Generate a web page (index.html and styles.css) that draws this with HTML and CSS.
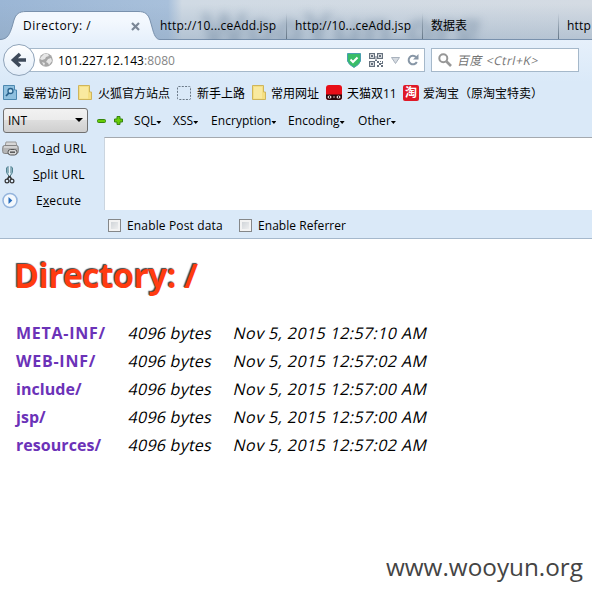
FILE: index.html
```html
<!DOCTYPE html>
<html lang="zh-CN">
<head>
<meta charset="utf-8">
<title>Directory: /</title>
<link rel="stylesheet" href="styles.css">
</head>
<body>
<header class="chrome">
  <div class="tabs">
    <div class="tab active">
      <svg class="tab-shape" width="160" height="41" viewBox="0 0 160 41">
        <defs><linearGradient id="tabfill" x1="0" y1="0" x2="0" y2="1"><stop offset="0.3" stop-color="#f3f8fe"/><stop offset="1" stop-color="#e6f0fb"/></linearGradient></defs>
        <path d="M0 39.5C8 39.500 10 33 12 27L14 20C16 14 19 11.500 26 11.500H138C145 11.500 148 14 150 20L152 27C154 35 156 39.500 160 39.500V41H0Z" fill="url(#tabfill)"/>
        <path d="M0 39.500C8 39.500 10 33 12 27L14 20C16 14 19 11.500 26 11.500H138C145 11.500 148 14 150 20L152 27C154 35 156 39.500 160 39.500" fill="none" stroke="#7991ad"/>
      </svg>
      <span class="label">Directory: /</span>
      <svg class="close" width="9" height="9" viewBox="0 0 9 9"><path d="M1 1L8 8M8 1L1 8" stroke="#7b8796" stroke-width="2.200"/></svg>
    </div>
    <div class="tab">http://10...ceAdd.jsp</div>
    <div class="tab">http://10...ceAdd.jsp</div>
    <div class="tab cjk">数据表</div>
    <div class="tab last">http</div>
  </div>

  <div class="nav">
    <svg class="back" width="34" height="34" viewBox="0 0 34 34">
      <defs><linearGradient id="backfill" x1="0" y1="0" x2="0" y2="1"><stop offset="0" stop-color="#fff"/><stop offset="1" stop-color="#e2edf9"/></linearGradient></defs>
      <circle cx="16" cy="16" r="15.500" fill="url(#backfill)" stroke="#8fa3b9"/>
      <path d="M17 10L10.500 16L17 22M11 16H23" fill="none" stroke="#3e4a5a" stroke-width="3.600"/>
    </svg>
    <div class="urlbar">
      <svg class="globe" width="14" height="14" viewBox="0 0 14 14"><circle cx="7" cy="7" r="6.800" fill="#a6a6a6"/><path d="M2 4L5 1L9 1L10 3L7 4L6 6L3 7L1 6ZM9 6L12 5L13 8L10 12L9 10L7 9ZM3 9L6 10L5 13Z" fill="#e6e6e6"/></svg>
      <span class="url">101.227.12.143<span class="port">:8080</span></span>
      <svg class="shield" width="14" height="15" viewBox="0 0 14 15"><path d="M.5 .5H13.500V8Q12.500 11.500 7 14.500Q1.500 11.500 .5 8Z" fill="#39bd68" stroke="#4a9fb0"/><path d="M3.500 6.500L6 9L10.500 4.500" fill="none" stroke="#fff" stroke-width="2"/></svg>
      <svg class="qr" width="15" height="15" viewBox="0 0 15 15"><g fill="none" stroke="#66717e" stroke-width="1.200"><path d="M.6.6H5.400V5.400H.6ZM8.600.6H13.400V5.400H8.600ZM.6 8.600H5.400V13.400H.6Z"/></g><path d="M2 2H4V4H2ZM10 2H12V4H10ZM2 10H4V12H2ZM8 8H10V10H8ZM11 8H12V9H11ZM13 8H14V11H12V10H13ZM10 10H12V12H10ZM8 12H10V14H8ZM12 12H14V14H12ZM6.500 3H7.500V7H6.500ZM6 7H8V8H6Z" fill="#66717e"/></svg>
      <svg class="drop" width="9" height="7" viewBox="0 0 9 7"><path d="M.5 .5H8.500L4.500 6.500Z" fill="#d5dae0" stroke="#a9b2bd"/></svg>
      <svg class="reload" width="12" height="12" viewBox="0 0 12 12"><path d="M9 3A4.300 4.300 0 1 0 9.800 8" fill="none" stroke="#8796a6" stroke-width="2"/><path d="M11.500 0V5.500H6Z" fill="#8796a6"/></svg>
    </div>
    <div class="search">
      <svg width="14" height="14" viewBox="0 0 14 14"><circle cx="5.300" cy="5.300" r="4" fill="none" stroke="#979797" stroke-width="2"/><path d="M8.500 8.500L13 13" stroke="#979797" stroke-width="2.600"/></svg>
      <span class="hint">百度 &lt;Ctrl+K&gt;</span>
    </div>
  </div>

  <div class="bookmarks">
    <div class="bm w75"><svg width="16" height="16" viewBox="0 0 16 16"><path d="M.5 .5H11.500V5H13.500V14.500H.5Z" fill="#8fc0df" stroke="#4c88b0"/><circle cx="7.500" cy="6" r="2.500" fill="#c9e6f5" stroke="#27608c" stroke-width="1.300"/><path d="M5.800 8L3 11" stroke="#27608c" stroke-width="1.800"/></svg>最常访问</div>
    <div class="bm w99"><svg width="16" height="16" viewBox="0 0 16 16"><path d="M.5 .5H11.500V7H13.500V14.500H.5Z" fill="#f5df82" stroke="#cfb55c"/><path d="M2 13.500V2H10V13.500Z" fill="#f9e99f"/></svg>火狐官方站点</div>
    <div class="bm w74"><svg width="16" height="16" viewBox="0 0 16 16"><rect x=".5" y="1.500" width="13" height="13" rx="1" fill="none" stroke="#697785" stroke-dasharray="2 1.300"/></svg>新手上路</div>
    <div class="bm w75"><svg width="16" height="16" viewBox="0 0 16 16"><path d="M1.500 .5H12.500V7H14.500V14.500H1.500Z" fill="#f5df82" stroke="#cfb55c"/><path d="M3 13.500V2H11V13.500Z" fill="#f9e99f"/></svg>常用网址</div>
    <div class="bm w77"><svg width="16" height="16" viewBox="0 0 16 16"><rect width="16" height="15" rx="3" fill="#e70e17"/><path d="M0 9.500H16V12Q16 15 13 15H3Q0 15 0 12Z" fill="#2b080b"/><ellipse cx="3.500" cy="12" rx="2" ry="1.600" fill="#e5d7d7"/><ellipse cx="12.500" cy="12" rx="2" ry="1.600" fill="#e5d7d7"/><path d="M3 11H4V13H3ZM12 11H13V13H12Z" fill="#222"/><path d="M7 12H9" stroke="#bbb"/></svg>天猫双11</div>
    <div class="bm"><span class="tao">淘</span>爱淘宝（原淘宝特卖）</div>
  </div>

  <div class="hackmenu">
    <div class="select"><span>INT</span><i class="arrow"></i></div>
    <svg class="minus" width="9" height="5" viewBox="0 0 9 5"><rect x=".5" y=".5" width="8" height="3" rx="1" fill="#66cc08" stroke="#36850f"/></svg>
    <svg class="plus" width="9" height="9" viewBox="0 0 9 9"><path d="M3 .5H6V3H8.500V6H6V8.500H3V6H.5V3H3Z" fill="#66cc08" stroke="#36850f"/></svg>
    <span class="menu m1">SQL<i></i></span><span class="menu m2">XSS<i></i></span><span class="menu m3">Encryption<i></i></span><span class="menu m4">Encoding<i></i></span><span class="menu m5">Other<i></i></span>
  </div>

  <div class="hackbody">
    <div class="actions">
      <div class="action"><svg width="18" height="18" viewBox="0 0 18 18"><path d="M4 2H14L15 7H3Z" fill="#d7d7d7" stroke="#999"/><rect x=".7" y="5.500" width="15.600" height="8" rx="2" fill="#b5b5b5" stroke="#858585"/><path d="M2 7H15" stroke="#eee"/><rect x="6" y="9.500" width="9" height="5.500" rx="2.500" fill="#d8d8d8" stroke="#555"/><path d="M8 12.200H13" stroke="#555" stroke-width="1.500"/></svg><span class="a1">Lo<u>a</u>d URL</span></div>
      <div class="action"><svg width="18" height="20" viewBox="0 0 18 20"><path d="M4.500 3V7.500L7.500 12L10.500 7.500V3L9 1.500V8M6 8V1.500L4.500 3" fill="#c3dbe3" stroke="#4f8090"/><path d="M7.500 2V12" stroke="#eaf4f8"/><path d="M7.500 11L5.500 14M7.500 11L9.500 14" stroke="#333" stroke-width="1.500"/><circle cx="5" cy="16" r="1.900" fill="none" stroke="#333" stroke-width="1.200"/><circle cx="10" cy="16" r="1.900" fill="none" stroke="#333" stroke-width="1.200"/></svg><span class="a2"><u>S</u>plit URL</span></div>
      <div class="action"><svg width="18" height="18" viewBox="0 0 18 18"><circle cx="8" cy="8.500" r="7" fill="#f3f8fd" stroke="#94b4dc" stroke-width="1.500"/><path d="M6.500 5L10.300 8.500L6.500 12Z" fill="#286dbd"/></svg><span class="a3">E<u>x</u>ecute</span></div>
    </div>
    <div class="payload"></div>
  </div>
  <div class="checks">
    <span class="check c1"><i class="box"></i>Enable Post data</span>
    <span class="check c2"><i class="box"></i>Enable Referrer</span>
  </div>
</header>

<main>
  <h1>Directory: /</h1>
  <table>
    <tr><td class="name caps">META-INF/</td><td class="size"><span>4096 bytes</span></td><td class="date"><span>Nov 5, 2015 12:57:10 AM</span></td></tr>
    <tr><td class="name caps">WEB-INF/</td><td class="size"><span>4096 bytes</span></td><td class="date"><span>Nov 5, 2015 12:57:02 AM</span></td></tr>
    <tr><td class="name">include/</td><td class="size"><span>4096 bytes</span></td><td class="date"><span>Nov 5, 2015 12:57:00 AM</span></td></tr>
    <tr><td class="name">jsp/</td><td class="size"><span>4096 bytes</span></td><td class="date"><span>Nov 5, 2015 12:57:00 AM</span></td></tr>
    <tr><td class="name">resources/</td><td class="size"><span>4096 bytes</span></td><td class="date"><span>Nov 5, 2015 12:57:02 AM</span></td></tr>
  </table>
  <footer>www.wooyun.org</footer>
</main>
</body>
</html>
```
FILE: styles.css
```css
* { box-sizing: border-box; }
body {
  margin: 0;
  width: 592px;
  height: 596px;
  overflow: hidden;
  background: #fff;
  color: #000;
  font: 12px/16px "Open Sans", "Noto Sans CJK SC", sans-serif;
  display: flex;
  flex-direction: column;
}
svg { flex: none; display: block; }
.chrome {
  height: 239px;
  flex: none;
  background: #dae9f8;
  border-bottom: 1px solid #a5b8cc;
  white-space: nowrap;
}

/* Tab strip */
.tabs {
  position: relative;
  height: 40px;
  display: flex;
  overflow: hidden;
  background: linear-gradient(#8397ad00 10%, #8fa6be73), linear-gradient(90deg, #9bb6d5 0, #a8c0db 168px, #d0dae4 182px, #d4dbe3 100%);
  box-shadow: inset 0 -1px #7991ad;
}
.tabs::before {
  content: "WooYun.org";
  position: absolute;
  left: 202px;
  top: 5px;
  font: bold 46px/46px "Open Sans", sans-serif;
  color: #5f7892;
  opacity: .4;
  filter: blur(4px);
}
.tab {
  position: relative;
  width: 136px;
  height: 40px;
  padding: 18px 0 0 8px;
  letter-spacing: .22px;
  flex: none;
}
.tab:nth-child(2) { padding-left: 9px; }
.tab:nth-child(2), .tab:nth-child(3) { letter-spacing: .18px; }
.tab.cjk { letter-spacing: 0; }
.tab::after {
  content: "";
  position: absolute;
  right: 0;
  top: 13px;
  width: 1px;
  height: 26px;
  background: linear-gradient(#8797a700, #667787);
}
.tab.active {
  width: 151px;
  padding-left: 23px;
  display: flex;
  z-index: 1;
}
.tab.active::after, .tab.last::after { display: none; }
.tab-shape { position: absolute; left: 0; top: 0; }
.label { position: relative; width: 108px; letter-spacing: .5px; }
.close { position: relative; margin-top: 4px; }

/* Navigation */
.nav {
  height: 42px;
  display: flex;
  padding: 4px 0 0 3px;
  background: linear-gradient(#e6f0fb, #dae9f8);
}
.back { position: relative; z-index: 1; }
.urlbar {
  width: 407px;
  height: 24px;
  margin: 4px 0 0 -19px;
  padding-left: 20px;
  display: flex;
  align-items: center;
  background: #fff;
  border: 1px solid #a5b8ca;
}
.url { width: 289px; margin-left: 5px; padding-top: 1px; letter-spacing: .08px; }
.port { color: #858585; }
.shield { margin-right: 8px; }
.qr { margin-right: 7px; }
.drop { margin-right: 7px; }
.search {
  width: 148px;
  height: 24px;
  margin: 4px 0 0 6px;
  padding-left: 6px;
  display: flex;
  align-items: center;
  gap: 6px;
  background: #fff;
  border: 1px solid #a5b8ca;
  color: #757575;
}
.hint { transform: skewX(-12deg); letter-spacing: .55px; padding-top: 1px; }

/* Bookmarks */
.bookmarks { height: 25px; padding: 3px 0 0 3px; display: flex; }
.bm { display: flex; gap: 4px; flex: none; height: 16px; line-height: 18px; }
.w74 { width: 74px; }
.w75 { width: 75px; }
.w77 { width: 77px; gap: 5px; }
.w99 { width: 99px; }
.tao {
  width: 16px;
  height: 16px;
  line-height: 15px;
  border-radius: 2px;
  background: #df1927;
  color: #fff;
  text-align: center;
  font-weight: bold;
}

/* Injection toolbar */
.hackmenu { height: 30px; display: flex; padding-left: 3px; }
.select {
  width: 85px;
  height: 25px;
  margin: 1px 9px 0 0;
  padding: 4px 4px;
  display: flex;
  justify-content: space-between;
  border: 1px solid #707070;
  border-radius: 3px;
  background: linear-gradient(#f2f2f2, #ebebeb 50%, #dddddd 50%, #cfcfcf);
}
.arrow { margin-top: 5px; border: 4px solid transparent; border-top-color: #000; border-bottom: 0; height: 4px; }
.minus { margin: 12px 8px 0 0; }
.plus { margin: 9px 11px 0 0; }
.menu { margin-top: 6px; display: flex; letter-spacing: .05px; }
.menu i { width: 5px; height: 3px; background: #000; clip-path: polygon(0 0, 100% 0, 50% 100%); margin: 8px 0 0 0; }
.m1 { width: 39px; }
.m2 { width: 38px; }
.m3 { width: 77px; }
.m4 { width: 70px; }
.hackbody { height: 74px; display: flex; }
.actions { width: 104px; height: 78px; flex: none; }
.action { height: 26px; display: flex; align-items: center; padding-left: 2px; letter-spacing: .2px; }
.action:first-child { margin-top: -1px; }
.action u { text-underline-offset: 1px; }
.a1 { margin-left: 12px; }
.a2 { margin-left: 13px; }
.a3 { margin-left: 16px; }
.payload { flex: 1; height: 73px; background: #fff; border-top: 1px solid #a4a9af; border-left: 1px solid #cbd5df; }
.checks { display: flex; padding: 7px 0 0 108px; }
.check { display: flex; gap: 6px; letter-spacing: .15px; }
.c1 { width: 131px; }
.c2 { letter-spacing: .05px; }
.box { width: 13px; height: 13px; margin-top: 1px; border: 1px solid #858789; background: linear-gradient(135deg, #c9ced3, #f5f5f5); box-shadow: inset 0 0 0 2px #f3f3f3; }

/* Listing */
main { flex: 1; display: flex; flex-direction: column; }
h1 {
  margin: 13px 0 0 14px;
  font: bold 34px/46px "Open Sans", sans-serif;
  letter-spacing: -.7px;
  color: #ff3b10;
  text-shadow: -1px -1px 1px #444;
}
table { margin: 21px 0 0 16px; width: 430px; border-collapse: collapse; table-layout: fixed; font-size: 16px; line-height: 26px; }
td { padding: 0; height: 28px; white-space: nowrap; }
.name { width: 113px; color: #6b32b8; font-weight: bold; letter-spacing: .05px; }
.caps { letter-spacing: .75px; }
.size { width: 105px; }
.size span, .date span { display: inline-block; transform: skewX(-13deg); }
.size span { letter-spacing: .25px; }
.date span { letter-spacing: .42px; }
footer { margin: auto 9px 12px auto; font-size: 24.3px; line-height: 34px; color: #444; }
```
